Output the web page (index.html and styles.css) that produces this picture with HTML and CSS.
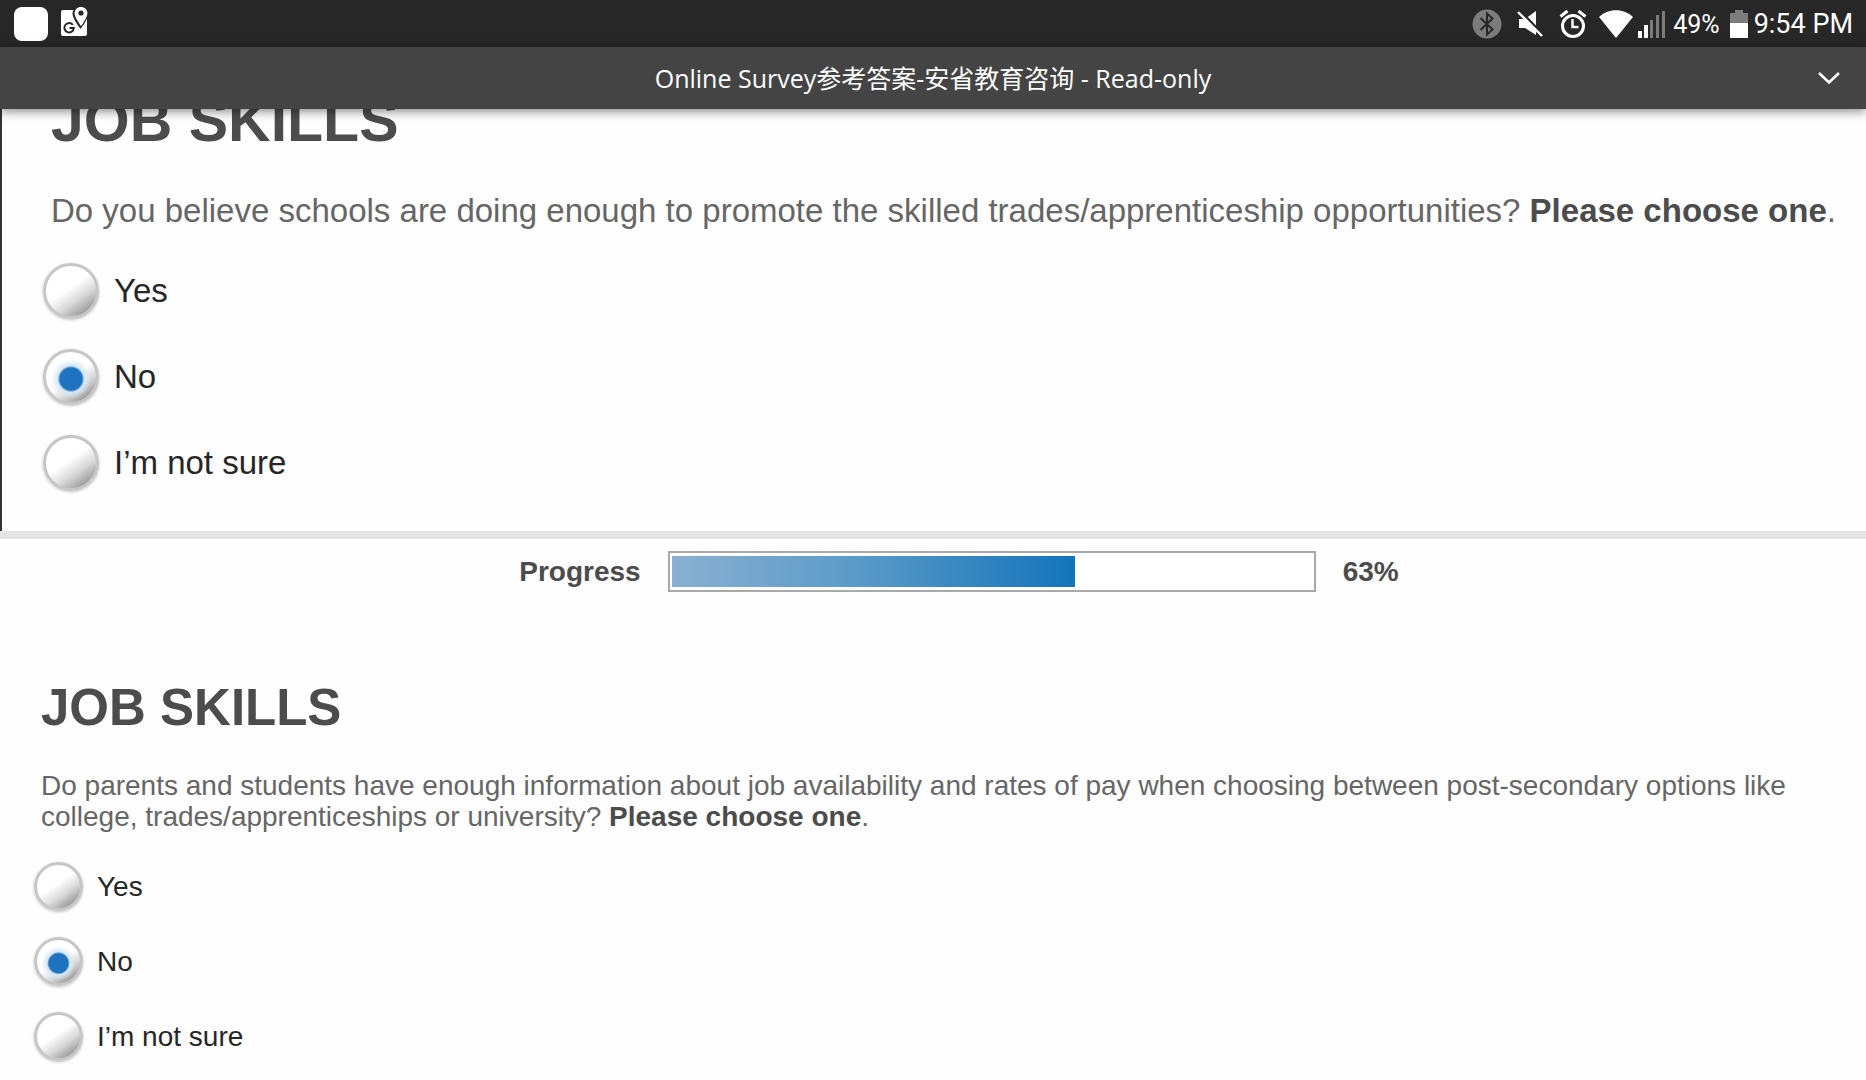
FILE: index.html
```html
<!DOCTYPE html>
<html lang="en">
<head>
  <meta charset="utf-8">
  <title>Online Survey参考答案-安省教育咨询</title>
  <link rel="stylesheet" href="styles.css">
</head>
<body>
  <div class="status-bar">
    <div class="status-left">
      <span class="app-square"></span>
      <svg class="icon-maps" width="28" height="32" viewBox="0 0 28 32">
        <path d="M3 4h22a2 2 0 0 1 2 2v22a2 2 0 0 1-2 2H3a2 2 0 0 1-2-2V6a2 2 0 0 1 2-2z" fill="#fff"/>
        <path d="M20.500 0c-4.400 0-8 3.400-8 7.600 0 5.400 8 15.400 8 15.400s8-10 8-15.400C28.500 3.400 25 0 20.500 0z" fill="#272727"/>
        <path d="M21 1c-3.600 0-6.400 2.700-6.400 6.200C14.600 11.800 21 20 21 20s6.400-8.200 6.400-12.800C27.400 3.700 24.600 1 21 1z" fill="#fff"/>
        <circle cx="21" cy="7" r="2.600" fill="#272727"/>
        <path d="M12.800 18.800a4.700 4.700 0 1 0 1 3.200H9.500" fill="none" stroke="#272727" stroke-width="2"/>
      </svg>
    </div>
    <div class="status-right">
      <svg width="30" height="30" viewBox="0 0 30 30">
        <circle cx="15" cy="15" r="14.500" fill="#7c7c7c"/>
        <path d="M8.500 9l12 11.500-5.500 5V4.500l5.500 5L8.500 21" fill="none" stroke="#272727" stroke-width="2"/>
      </svg>
      <svg class="icon-mute" width="27" height="28" viewBox="0 0 27 28">
        <path d="M2 9h6l11-8v24l-11-7H2z" fill="#fff"/>
        <path d="M2 0l25 26" stroke="#272727" stroke-width="3"/>
        <path d="M1 2l24 24" stroke="#fff" stroke-width="2.400"/>
      </svg>
      <svg class="icon-alarm" width="28" height="30" viewBox="0 0 28 30">
        <circle cx="14" cy="17" r="10.500" fill="none" stroke="#fff" stroke-width="3"/>
        <path d="M13.500 10v8h6" fill="none" stroke="#fff" stroke-width="2.400"/>
        <path d="M1.500 7.500l7-5.500M26.500 7.500l-7-5.500" stroke="#fff" stroke-width="3"/>
      </svg>
      <svg class="icon-wifi" width="34" height="28" viewBox="0 0 34 28">
        <path d="M17 28L0 7C9-2 25-2 34 7z" fill="#fff"/>
      </svg>
      <svg class="icon-signal" width="29" height="28" viewBox="0 0 29 28">
        <path d="M1 21h4v7H1zM7 15h4v13H7z" fill="#fff"/>
        <path d="M13 10h3v18h-3zM19 5h3v23h-3zM25 1h3v27h-3z" fill="#7c7c7c"/>
      </svg>
      <span class="battery-level">49%</span>
      <svg class="icon-battery" width="18" height="28" viewBox="0 0 18 28">
        <path d="M0 3h5V0h8v3h5v11H0z" fill="#7c7c7c"/>
        <path d="M0 13h18v15H0z" fill="#fff"/>
      </svg>
      <span class="clock">9:54 PM</span>
    </div>
  </div>

  <header class="title-bar">
    <div class="doc-title">Online Survey参考答案-安省教育咨询 - Read-only</div>
    <button class="expand" type="button" aria-label="Expand">
      <svg width="24" height="16" viewBox="0 0 24 16">
        <path d="M2 3l10 9.500L22 3" fill="none" stroke="#fff" stroke-width="2.600"/>
      </svg>
    </button>
  </header>

  <main>
    <section class="page page-large">
      <h1>JOB SKILLS</h1>
      <form>
        <p class="question" id="q1">Do you believe schools are doing enough to promote the skilled trades/apprenticeship opportunities? <b>Please choose one</b>.</p>
        <div class="options" role="radiogroup" aria-labelledby="q1">
          <label class="option"><input type="radio" name="promote">Yes</label>
          <label class="option"><input type="radio" name="promote" checked>No</label>
          <label class="option"><input type="radio" name="promote">I’m not sure</label>
        </div>
      </form>
    </section>

    <section class="page page-small">
      <div class="progress-row">
        <label for="progress">Progress</label>
        <progress id="progress" value="63" max="100"></progress>
        <span>63%</span>
      </div>
      <h1>JOB SKILLS</h1>
      <form>
        <p class="question" id="q2">Do parents and students have enough information about job availability and rates of pay when choosing between post-secondary options like college, trades/apprenticeships or university? <b>Please choose one</b>.</p>
        <div class="options" role="radiogroup" aria-labelledby="q2">
          <label class="option"><input type="radio" name="information">Yes</label>
          <label class="option"><input type="radio" name="information" checked>No</label>
          <label class="option"><input type="radio" name="information">I’m not sure</label>
        </div>
      </form>
    </section>
  </main>
</body>
</html>
```

FILE: styles.css
```css
* {
  box-sizing: border-box;
}
body {
  margin: 0;
  height: 100vh;
  display: flex;
  flex-direction: column;
  overflow: hidden;
  background-color: #fefefe;
  font-family: "Liberation Sans", Arial, sans-serif;
}

/* status bar */
.status-bar {
  flex: none;
  height: 47px;
  padding: 1px 13px 0 14px;
  display: flex;
  align-items: center;
  justify-content: space-between;
  background-color: #272727;
  color: #fff;
  font-family: Roboto, sans-serif;
}
.status-left,
.status-right {
  display: flex;
  align-items: center;
}
.status-left {
  gap: 12px;
}
.status-right svg {
  flex: none;
}
.app-square {
  width: 34px;
  height: 34px;
  border-radius: 8px;
  background-color: #fff;
}
.icon-maps {
  margin-bottom: 4px;
}
.icon-mute {
  margin-left: 15px;
}
.icon-alarm {
  margin-left: 15px;
}
.icon-wifi {
  margin-left: 12px;
}
.icon-signal {
  margin-left: 4px;
}
.battery-level {
  margin-left: 7px;
  font-size: 25px;
}
.icon-battery {
  margin: 0 6px 0 10px;
}
.clock {
  font-size: 27px;
}

/* title bar */
.title-bar {
  flex: none;
  position: relative;
  z-index: 1;
  height: 62px;
  padding: 0 22px;
  display: grid;
  grid-template-columns: 30px 1fr 30px;
  align-items: center;
  background-color: #444;
  color: #fff;
  box-shadow: 0 2px 10px rgba(0,0,0,0.5);
}
.doc-title {
  grid-column: 2;
  text-align: center;
  font-family: "Open Sans", "Noto Sans CJK SC", sans-serif;
  font-size: 25px;
  line-height: 32px;
}
.expand {
  display: flex;
  justify-content: center;
  padding: 0;
  border: none;
  background: none;
  cursor: pointer;
}

/* document pages */
main {
  flex: 1;
  min-height: 0;
  overflow: hidden;
}
.page {
  color: #4c4c4c;
}
.page h1 {
  margin: 0;
}
.question {
  margin: 0;
  color: #666;
}
.question b {
  color: #4c4c4c;
}
.options {
  display: flex;
  flex-direction: column;
  align-items: flex-start;
}
.option {
  display: flex;
  align-items: center;
  color: #262626;
}
.option input {
  appearance: none;
  flex: none;
  margin: 0;
  border: 3px solid #c6c6c6;
  border-radius: 50%;
  background: linear-gradient(145deg, #fff 45%, #d8d8d8 66%, #8c8c8c 92%);
  box-shadow: 0 1px 3px rgba(0,0,0,0.25);
}
.option input:checked {
  background:
    radial-gradient(circle at 50% 54%, #1f72c0 0 30%, #d5e8f6 36%, rgba(255,255,255,0) 54%),
    linear-gradient(145deg, #fff 50%, #d8d8d8 68%, #8c8c8c 92%);
}

.page-large {
  padding: 0 16px 40px 49px;
  border-left: 2px solid #333;
}
.page-large h1 {
  margin-top: -17px;
  font-size: 59px;
  line-height: 58px;
}
.page-large .question {
  margin-top: 43px;
  font-size: 33px;
  line-height: 36px;
}
.page-large .options {
  gap: 30px;
  margin: 34px 0 0 -8px;
}
.page-large .option {
  gap: 15px;
  font-size: 33px;
  line-height: 56px;
}
.page-large .option input {
  width: 56px;
  height: 56px;
}

.page-small {
  padding: 12px 16px 20px 41px;
  border-top: 8px solid #e4e4e4;
}
.page-small h1 {
  margin-top: 90px;
  font-size: 51px;
  line-height: 51px;
}
.page-small .question {
  margin-top: 37px;
  font-size: 28px;
  line-height: 31px;
}
.page-small .options {
  gap: 26px;
  margin: 30px 0 0 -7px;
}
.page-small .option {
  gap: 14px;
  font-size: 28px;
  line-height: 49px;
}
.page-small .option input {
  width: 49px;
  height: 49px;
}

.progress-row {
  display: flex;
  align-items: center;
  justify-content: center;
  gap: 27px;
  padding-left: 27px;
  font-size: 28px;
  font-weight: bold;
}
progress {
  appearance: none;
  width: 648px;
  height: 41px;
  border: 2px solid #a9a9a9;
  background-color: #fff;
}
progress::-webkit-progress-bar {
  padding: 3px 2px;
  background-color: #fff;
}
progress::-webkit-progress-value {
  background: linear-gradient(to right, #8ab0d2, #5b9bc8 45%, #1474bb);
}
```
